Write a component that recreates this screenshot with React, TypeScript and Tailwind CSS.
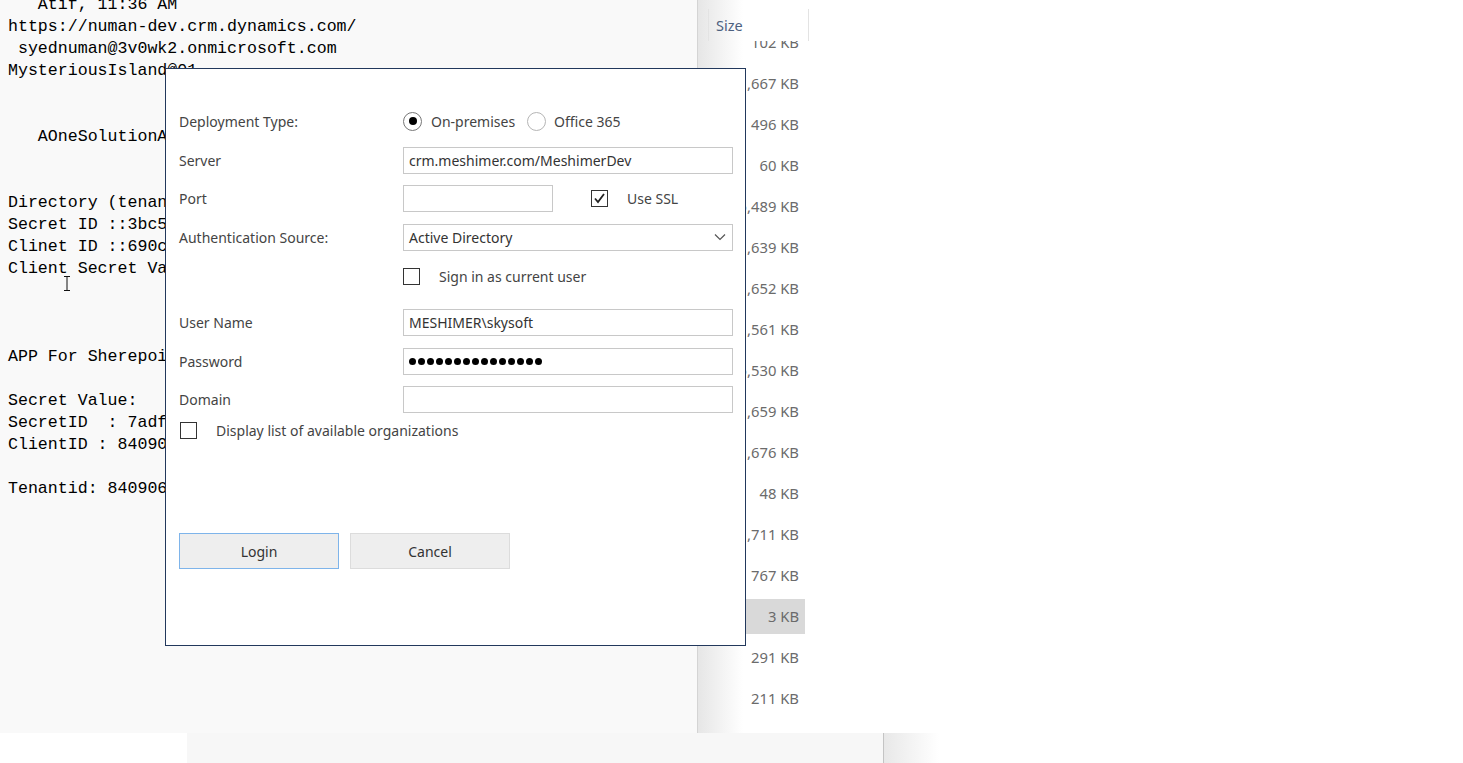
import React from "react"

const NOTE_LINES = [
    "   Atif, 11:36 AM",
    "https://numan-dev.crm.dynamics.com/",
    " syednuman@3v0wk2.onmicrosoft.com",
    "MysteriousIsland@01",
    "",
    "",
    "   AOneSolutionA",
    "",
    "",
    "Directory (tenan",
    "Secret ID ::3bc5",
    "Clinet ID ::690c",
    "Client Secret Va",
    "",
    "",
    "",
    "APP For Sherepoi",
    "",
    "Secret Value:",
    "SecretID  : 7adf",
    "ClientID : 84090",
    "",
    "Tenantid: 840906",
]

const SIZES = [
    "102 KB",
    "1,667 KB",
    "496 KB",
    "60 KB",
    "5,489 KB",
    "1,639 KB",
    "1,652 KB",
    "1,561 KB",
    "5,530 KB",
    "1,659 KB",
    "1,676 KB",
    "48 KB",
    "1,711 KB",
    "767 KB",
    "3 KB",
    "291 KB",
    "211 KB",
]

const UI_FONT = "font-['Segoe_UI','Noto_Sans',sans-serif]"

function Checkbox({ checked = false }: { checked?: boolean }) {
    return (
        <div className="flex h-[17px] w-[17px] shrink-0 items-center justify-center border border-[#333] bg-white">
            {checked && (
                <svg width="13" height="13" viewBox="0 0 13 13">
                    <path d="M2 6.5 L5 10 L11 2" fill="none" stroke="#222" strokeWidth="1.8" />
                </svg>
            )}
        </div>
    )
}

function Radio({ checked = false }: { checked?: boolean }) {
    return (
        <div
            className={`flex h-[19px] w-[19px] shrink-0 items-center justify-center rounded-full border ${checked ? "border-[#777]" : "border-[#b5b5b5]"
                } bg-white`}
        >
            {checked && <div className="h-[8px] w-[8px] rounded-full bg-black" />}
        </div>
    )
}

function TextBox({ value, className = "w-[330px]" }: { value?: string; className?: string }) {
    return (
        <div className={`flex h-[27px] items-center border border-[#c8c8c8] bg-white pl-[5px] text-[14px] text-[#333] ${className}`}>
            {value}
        </div>
    )
}

function Notepad() {
    return (
        <div className="relative w-[697px] shrink-0 overflow-hidden bg-[#f9f9f9] pl-[8px]">
            <pre className="-mt-[6px] font-['Liberation_Mono',monospace] text-[16.6px] leading-[22px] text-black">
                {NOTE_LINES.join("\n")}
            </pre>
            {/* text cursor */}
            <svg className="absolute left-[63px] top-[276px]" width="8" height="15" viewBox="0 0 8 15">
                <path d="M1 0.5 H7 M4 0.5 V14.5 M1 14.5 H7" stroke="#111" strokeWidth="1" fill="none" />
            </svg>
        </div>
    )
}

function Explorer() {
    return (
        <div className={`flex flex-1 flex-col border-l border-[#d4d4d4] bg-[linear-gradient(to_right,#e6e6e6,#ffffff_45px)] ${UI_FONT}`}>
            {/* HEADER */}
            <div className="flex h-[41px] shrink-0 pl-[10px] pt-[9px]">
                <div className="flex h-[32px] w-[101px] items-center border-x border-[#e3e3e3] pl-[7px] pt-[1px] text-[14.5px] text-[#4c607f]">
                    Size
                </div>
            </div>

            {/* ROWS */}
            <div className="flex-1 overflow-hidden">
                <div className="-mt-[19px] ml-[10px] w-[97px]">
                    {SIZES.map(size => (
                        <div key={size} className="flex h-[41px] items-center">
                            <div
                                className={`flex h-[35px] w-full items-center justify-end pr-[6px] text-[14.8px] text-[#6b6b6b] ${size === "3 KB" ? "bg-[#d9d9d9]" : ""
                                    }`}
                            >
                                {size}
                            </div>
                        </div>
                    ))}
                </div>
            </div>
        </div>
    )
}

function LoginDialog() {
    return (
        <div className={`absolute left-[165px] top-[68px] flex h-[578px] w-[581px] flex-col border border-[#22385c] bg-white pl-[13px] pt-[39px] text-[14px] text-[#444] ${UI_FONT}`}>
            {/* DEPLOYMENT TYPE */}
            <div className="flex h-[26px] items-center">
                <span className="w-[224px]">Deployment Type:</span>
                <Radio checked />
                <span className="ml-[9px] w-[96px]">On-premises</span>
                <Radio />
                <span className="ml-[8px]">Office 365</span>
            </div>

            {/* SERVER */}
            <div className="mt-[13px] flex h-[26px] items-center">
                <span className="w-[224px]">Server</span>
                <TextBox value="crm.meshimer.com/MeshimerDev" />
            </div>

            {/* PORT + SSL */}
            <div className="mt-[12px] flex h-[26px] items-center">
                <span className="w-[224px]">Port</span>
                <TextBox className="w-[150px]" />
                <div className="ml-[38px]">
                    <Checkbox checked />
                </div>
                <span className="ml-[19px]">Use SSL</span>
            </div>

            {/* AUTH SOURCE */}
            <div className="mt-[13px] flex h-[26px] items-center">
                <span className="w-[224px]">Authentication Source:</span>
                <div className="flex h-[27px] w-[330px] items-center justify-between border border-[#c8c8c8] bg-white pl-[5px] pr-[6px] text-[#333]">
                    <span>Active Directory</span>
                    <svg width="12" height="8" viewBox="0 0 12 8">
                        <path d="M1 1.5 L6 6.5 L11 1.5" fill="none" stroke="#555" strokeWidth="1.2" />
                    </svg>
                </div>
            </div>

            {/* SIGN IN AS CURRENT USER */}
            <div className="mt-[13px] flex h-[26px] items-center pl-[224px]">
                <Checkbox />
                <span className="ml-[19px]">Sign in as current user</span>
            </div>

            {/* USER NAME */}
            <div className="mt-[20px] flex h-[26px] items-center">
                <span className="w-[224px]">User Name</span>
                <TextBox value="MESHIMER\skysoft" />
            </div>

            {/* PASSWORD */}
            <div className="mt-[13px] flex h-[26px] items-center">
                <span className="w-[224px]">Password</span>
                <div className="flex h-[27px] w-[330px] items-center gap-[2px] border border-[#c8c8c8] bg-white pl-[5px]">
                    {Array.from({ length: 15 }).map((_, i) => (
                        <div key={i} className="h-[7px] w-[7px] rounded-full bg-black" />
                    ))}
                </div>
            </div>

            {/* DOMAIN */}
            <div className="mt-[12px] flex h-[26px] items-center">
                <span className="w-[224px]">Domain</span>
                <TextBox />
            </div>

            {/* DISPLAY ORGS */}
            <div className="mt-[5px] flex h-[26px] items-center pl-[1px]">
                <Checkbox />
                <span className="ml-[19px]">Display list of available organizations</span>
            </div>

            {/* BUTTONS */}
            <div className="mt-[90px] flex gap-[11px]">
                <button className="h-[36px] w-[160px] border border-[#7eb4ea] bg-[#eeeeee] text-[#333]">
                    Login
                </button>
                <button className="h-[36px] w-[160px] border border-[#dcdcdc] bg-[#eeeeee] text-[#333]">
                    Cancel
                </button>
            </div>
        </div>
    )
}

export default function App() {
    return (
        <div className="relative flex h-[763px] w-[1463px] flex-col overflow-hidden bg-white">
            <div className="flex h-[733px] shrink-0">
                <Notepad />
                <Explorer />
            </div>

            {/* BOTTOM STRIP */}
            <div className="flex flex-1">
                <div className="w-[187px] bg-white" />
                <div className="w-[697px] border-r border-[#c4c4c4] bg-[#f7f7f7]" />
                <div className="flex-1 bg-[linear-gradient(to_right,#e8e8e8,#ffffff_55px)]" />
            </div>

            <LoginDialog />
        </div>
    )
}
